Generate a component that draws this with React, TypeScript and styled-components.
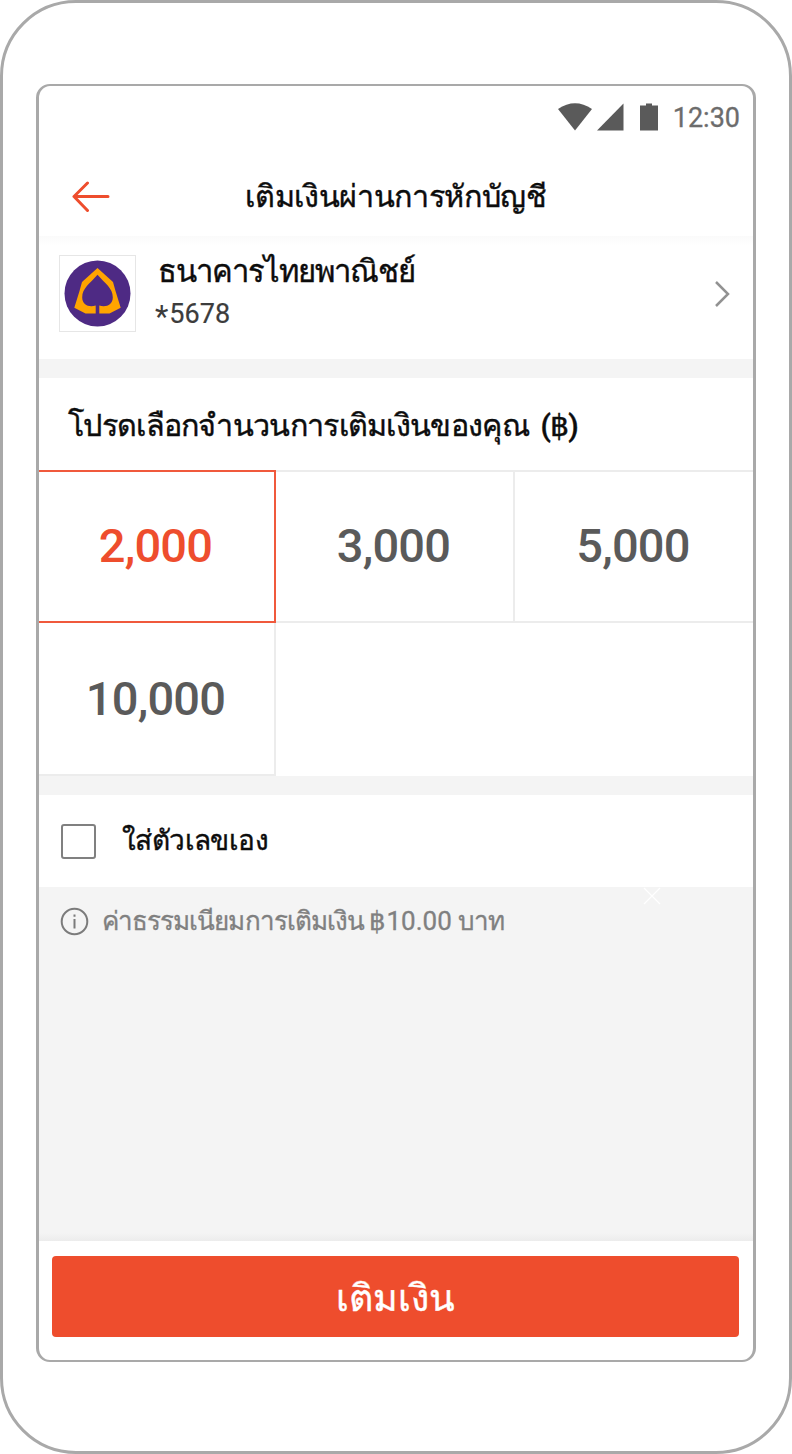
import React from 'react';
import styled, { createGlobalStyle } from 'styled-components';

const GlobalStyle = createGlobalStyle`
  *, *::before, *::after { box-sizing: border-box; }
  body { margin: 0; background: #fff; font-family: Roboto, sans-serif; color: #0c0c0c; }
  svg { display: block; flex: none; }
`;

const Phone = styled.div`
  width: 792px;
  height: 1454px;
  padding: 81px 33px 89px;
  border: 3px solid #a9a9a9;
  border-radius: 76px;
  background: #fff;
`;

const Screen = styled.main`
  display: flex;
  flex-direction: column;
  width: 720px;
  height: 1278px;
  border: solid #a9a9a9;
  border-width: 2px 3px;
  border-radius: 14px;
  overflow: hidden;
  background: #fff;
`;

const StatusBar = styled.div`
  display: flex;
  align-items: center;
  justify-content: flex-end;
  height: 64px;
  padding-right: 13px;
  color: #6c6c6c;
  font-size: 27px;
  line-height: 32px;
  -webkit-text-stroke: 0.3px currentColor;
`;

const StatusIcons = styled.svg`
  margin: 0 14px 2px 0;
`;

const Header = styled.header`
  display: grid;
  grid-template-columns: 110px 1fr 110px;
  align-items: center;
  height: 86px;
  padding-top: 7px;
`;

const BackButton = styled.button`
  width: 38px;
  margin-left: 33px;
  padding: 0;
  border: 0;
  background: none;
`;

const Thai = styled.span<{ $size: number; $tracking?: number; $weight?: number; $color?: string }>`
  font-size: ${p => p.$size}px;
  line-height: 44px;
  letter-spacing: ${p => p.$tracking ?? 0}px;
  color: ${p => p.$color ?? 'inherit'};
  -webkit-text-stroke: ${p => p.$weight ?? 0.4}px currentColor;
  white-space: nowrap;
`;

const Title = styled.h1`
  margin: 0;
  font-weight: 400;
  text-align: center;
  line-height: 44px;
`;

const BankRow = styled.section`
  display: flex;
  align-items: flex-start;
  height: 123px;
  padding: 19px 23px 0 20px;
  background: linear-gradient(#fafafa, #fff 10px);
`;

const BankLogo = styled.div`
  display: grid;
  place-items: center;
  width: 77px;
  height: 77px;
  border: 1px solid #e6e6e6;
`;

const BankInfo = styled.div`
  display: flex;
  flex: 1;
  flex-direction: column;
  padding-left: 22px;
  margin-top: -5px;
`;

const AccountNumber = styled.span`
  margin: 2px 0 0 -3px;
  color: #3c3c3c;
  font-size: 27px;
  line-height: 36px;
  -webkit-text-stroke: 0.2px currentColor;
`;

const Mask = styled.span`
  margin-right: 1px;
  font-size: 31px;
  line-height: 0;
  vertical-align: -4px;
  -webkit-text-stroke: 0;
`;

const Chevron = styled.svg`
  margin-top: 25px;
`;

const Divider = styled.div<{ $height: number }>`
  flex: none;
  height: ${p => p.$height}px;
  background: #f4f4f4;
`;

const SectionTitle = styled.h2`
  height: 92px;
  margin: 0;
  padding: 26px 0 0 29px;
  font-weight: 400;
  line-height: 44px;
`;

const Currency = styled.span`
  margin-left: 5px;
  font-size: 30px;
  font-weight: 500;
  letter-spacing: -0.8px;
`;

const AmountGrid = styled.div`
  display: grid;
  grid-template-columns: 237px 239px 238px;
  grid-template-rows: 153px 153px;
`;

const Amount = styled.button<{ $selected?: boolean; $edge?: 'right' | 'bottom' }>`
  display: flex;
  align-items: center;
  justify-content: center;
  padding: 0 2px ${p => (p.$edge === 'bottom' ? 0 : 2)}px 0;
  border: solid ${p => (p.$selected ? '#f0593c' : '#ececec')};
  border-width: ${p => (p.$edge === 'bottom' ? 0 : 2)}px ${p => (p.$edge === 'right' ? 0 : 2)}px 2px 0;
  background: #fff;
  color: ${p => (p.$selected ? '#ee4d2d' : '#5a5a5a')};
  font: 500 47px/56px Roboto, sans-serif;
  letter-spacing: -0.8px;
`;

const CustomRow = styled.label`
  display: flex;
  align-items: center;
  height: 92px;
  padding-left: 22px;
`;

const Checkbox = styled.span`
  width: 35px;
  height: 35px;
  margin-right: 26px;
  border: 2px solid #808080;
  border-radius: 3px;
`;

const Notice = styled.section`
  position: relative;
  display: flex;
  flex: 1;
  align-items: flex-start;
  padding: 12px 0 0 21px;
  background: linear-gradient(#f4f4f4 calc(100% - 8px), #ececec);
`;

const InfoIcon = styled.svg`
  margin: 8px 13px 0 0;
`;

const Fee = styled.span`
  letter-spacing: 0;
`;

const FaintCross = styled.svg`
  position: absolute;
  top: 0;
  left: 604px;
`;

const Footer = styled.footer`
  height: 119px;
  padding: 15px 14px 0 13px;
`;

const SubmitButton = styled.button`
  display: block;
  width: 100%;
  height: 81px;
  padding: 2px 0 0;
  border: 0;
  border-radius: 4px;
  background: #ee4d2d;
  color: #fff;
  font-family: inherit;
`;

const amounts = ['2,000', '3,000', '5,000', '10,000'];

export default function App() {
  return (
    <>
      <GlobalStyle />
      <Phone>
        <Screen>
          <StatusBar>
            <StatusIcons width="101" height="28" viewBox="0 0 101 28" fill="#5a5a5a">
              <path d="M0 6Q17-5.500 34 6L17 27.500Z" />
              <path d="M65.500 .5V27.500H39Z" />
              <path d="M82 2.500H88V.5H94V2.500H100V27.500H82Z" />
            </StatusIcons>
            12:30
          </StatusBar>
          <Header>
            <BackButton aria-label="ย้อนกลับ">
              <svg width="38" height="32" viewBox="0 0 38 32" fill="none" stroke="#ee4d2d" strokeWidth="3" strokeLinecap="round" strokeLinejoin="round">
                <path d="M36 15.500H2M15.500 2L2 15.500L15.500 29.500" />
              </svg>
            </BackButton>
            <Title><Thai $size={30.5} $tracking={-0.35}>เติมเงินผ่านการหักบัญชี</Thai></Title>
          </Header>
          <BankRow>
            <BankLogo>
              <svg width="67" height="67" viewBox="0 0 67 67">
                <circle cx="33.500" cy="33.500" r="33" fill="#4e2a84" />
                <path fill="#ffa400" fillRule="evenodd" d="M33.500 8L49 22L51.500 31L56.700 47.800L45.500 53.500H35.300V45.500C42 47.500 48.800 45 48.800 37.500C48.800 28 41 23.500 33.500 14.800C26 23.500 18.200 28 18.200 37.500C18.200 45 25 47.500 31.700 45.500V53.500H21.500L10.300 47.800L15.500 31L18 22Z" />
              </svg>
            </BankLogo>
            <BankInfo>
              <Thai $size={31} $tracking={-1}>ธนาคารไทยพาณิชย์</Thai>
              <AccountNumber><Mask>*</Mask>5678</AccountNumber>
            </BankInfo>
            <Chevron width="16" height="28" viewBox="0 0 16 28" fill="none" stroke="#929292" strokeWidth="2.500">
              <path d="M2 2L14 14L2 26" />
            </Chevron>
          </BankRow>
          <Divider $height={19} />
          <SectionTitle>
            <Thai $size={30.5} $tracking={-0.7}>โปรดเลือกจำนวนการเติมเงินของคุณ<Currency> (฿)</Currency></Thai>
          </SectionTitle>
          <AmountGrid>
            {amounts.map((amount, i) => (
              <Amount key={amount} $selected={i === 0} $edge={i === 2 ? 'right' : i === 3 ? 'bottom' : undefined}>{amount}</Amount>
            ))}
          </AmountGrid>
          <Divider $height={19} />
          <CustomRow>
            <Checkbox />
            <Thai $size={28} $tracking={-0.6}>ใส่ตัวเลขเอง</Thai>
          </CustomRow>
          <Notice>
            <InfoIcon width="29" height="29" viewBox="0 0 29 29" fill="none" stroke="#7b7b7b" strokeWidth="2">
              <circle cx="14.500" cy="14.500" r="12.800" />
              <path d="M14.500 12V21.500M14.500 7.500V9.700" />
            </InfoIcon>
            <Thai $size={26} $tracking={-0.95} $weight={0.3} $color="#808080">ค่าธรรมเนียมการเติมเงิน <Fee>฿10.00 </Fee>บาท</Thai>
            <FaintCross width="18" height="18" viewBox="0 0 18 18" fill="none" stroke="#fff" strokeWidth="1.200">
              <path d="M1 1L17 17M17 1L1 17" />
            </FaintCross>
          </Notice>
          <Footer>
            <SubmitButton><Thai $size={37.5}>เติมเงิน</Thai></SubmitButton>
          </Footer>
        </Screen>
      </Phone>
    </>
  );
}
